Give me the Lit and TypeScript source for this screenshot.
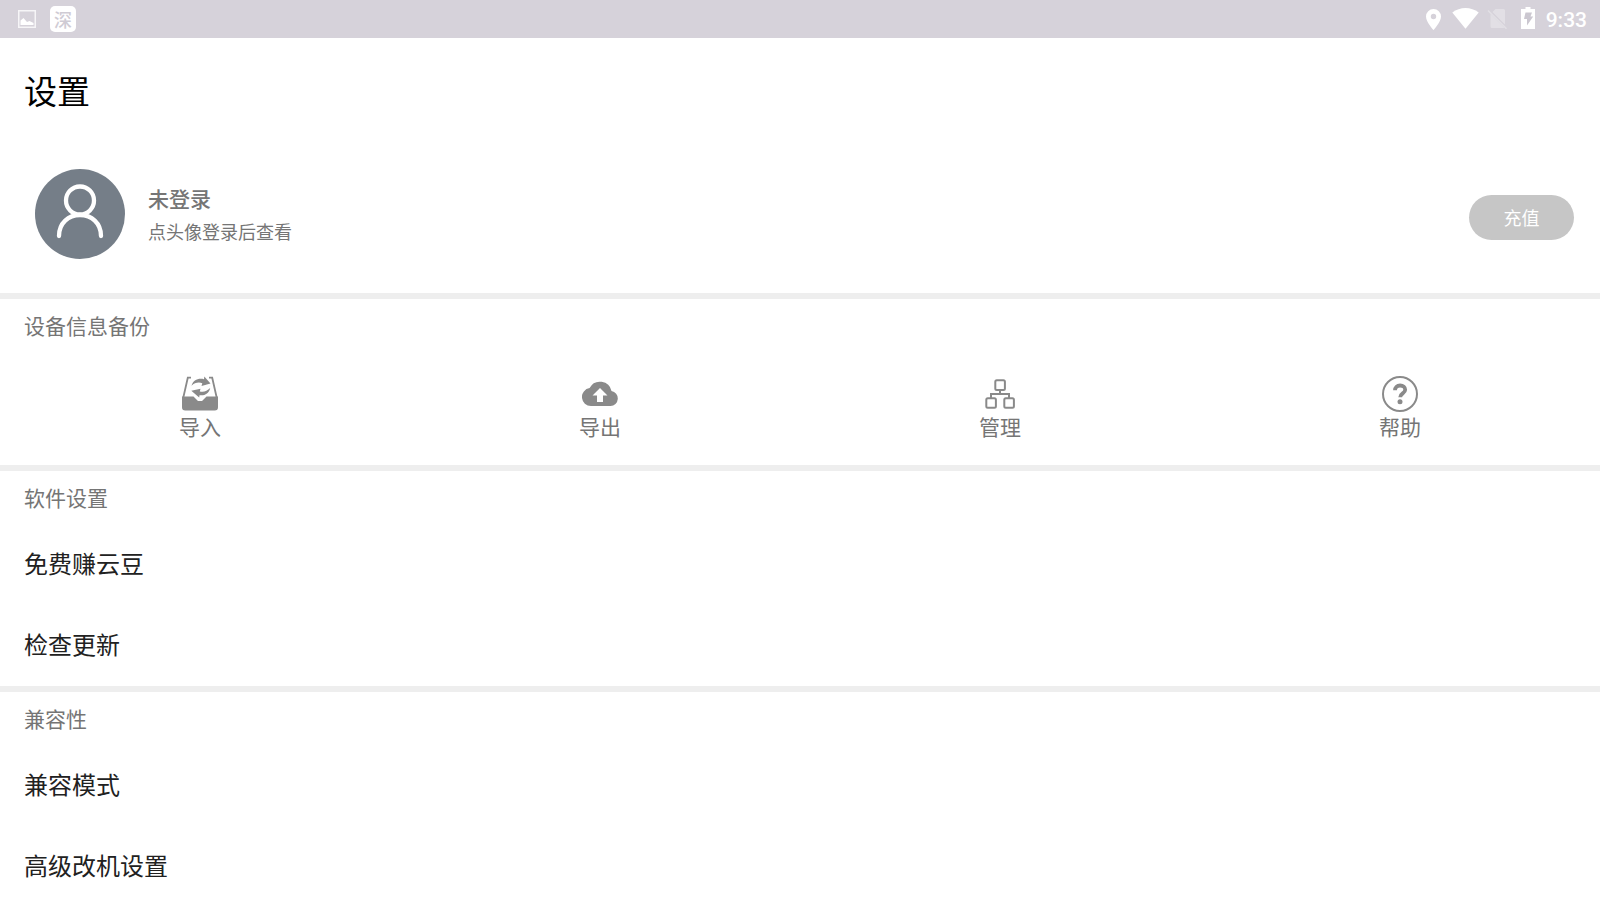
import { LitElement, html, css, svg, TemplateResult } from "lit";
import { customElement } from "lit/decorators.js";

interface Action {
  label: string;
  icon: TemplateResult;
}

interface Section {
  title: string;
  items: string[];
}

const importIcon = svg`
  <path d="M9 1.700H5.800L1.200 22M27 1.700h3.200L34.800 22" fill="none" stroke="currentColor" stroke-width="1.800"/>
  <path d="M0 20.500h11.500l4.500 4.500h4l4.500-4.500H36v10.700a3.300 3.300 0 0 1-3.300 3.300H3.300A3.300 3.300 0 0 1 0 31.200z"/>
  <path d="M9.500 9.800C11 4.500 16 1.800 22 3.200L22.300.6 28.500 7.500 19.500 10 20.300 7.200C16.500 5.800 12.500 6.800 9.500 9.800z"/>
  <path d="M28.200 12C27 17.500 22.500 20 17.500 19.200L17.200 21.500 9.300 14.800 18.500 12.800 17.800 15.400C21.500 16.500 25 15.200 28.200 12z"/>`;

const exportIcon = svg`
  <path d="M29.500 15.100A11.700 11.700 0 0 0 7.600 12.100 9 9 0 0 0 9 30h19.500a7.500 7.500 0 0 0 1-14.900zM21 19.500V26h-6v-6.500h-4.500L18 12l7.500 7.500z"/>`;

const manageIcon = svg`
  <g fill="none" stroke="currentColor" stroke-width="2">
    <rect x="13.300" y="4.300" width="9.600" height="9.600" rx="1.500"/>
    <rect x="4.300" y="22.200" width="9.600" height="9.600" rx="1.500"/>
    <rect x="22.300" y="22.200" width="9.600" height="9.600" rx="1.500"/>
    <path d="M18 14v4M9 22v-4h18v4"/>
  </g>`;

const helpIcon = svg`
  <circle cx="18" cy="18" r="17" fill="none" stroke="currentColor" stroke-width="2"/>
  <path d="M13 14.300c0-3 2-4.800 5.100-4.800s5.100 1.700 5.100 4.300c0 3.700-5 3.500-5 7.400" fill="none" stroke="currentColor" stroke-width="3.800"/>
  <circle cx="18" cy="25.800" r="2.500"/>`;

const actions: Action[] = [
  { label: "导入", icon: importIcon },
  { label: "导出", icon: exportIcon },
  { label: "管理", icon: manageIcon },
  { label: "帮助", icon: helpIcon },
];

const sections: Section[] = [
  { title: "软件设置", items: ["免费赚云豆", "检查更新"] },
  { title: "兼容性", items: ["兼容模式", "高级改机设置"] },
];

@customElement("status-bar")
export class StatusBar extends LitElement {
  static styles = css`
    :host {
      display: flex;
      flex: none;
      align-items: center;
      height: 38px;
      padding: 0 13px 0 18px;
      background: #d6d2da;
      color: #fff;
    }
    .picture {
      width: 18px;
      height: 18px;
    }
    .app {
      display: grid;
      place-items: center;
      width: 26px;
      height: 26px;
      margin-left: 14px;
      border-radius: 5px;
      background: #fff;
      color: #cfcbd4;
      font: 500 18px/26px "Noto Sans CJK SC", sans-serif;
    }
    .system {
      display: flex;
      margin-left: auto;
    }
    .glyph {
      width: 32px;
      height: 38px;
      fill: #fff;
    }
    .clock {
      font: 500 21px/40px Roboto, sans-serif;
      height: 38px;
    }
  `;

  render() {
    return html`
      <svg class="picture" viewBox="0 0 18 18" aria-hidden="true">
        <rect x=".75" y=".75" width="16.500" height="16.500" fill="none" stroke="#f6f5f7" stroke-width="1.500"/>
        <path d="M2.500 15v-4.500l3-2.500 3.500 4 2.500-1 4 2V15z" fill="#fff"/>
      </svg>
      <span class="app">深</span>
      <div class="system">
        <svg class="glyph" viewBox="0 0 32 38" aria-hidden="true">
          <path fill-rule="evenodd" d="M15.500 9A7.500 7.500 0 0 0 8 16.500C8 22 15.500 30 15.500 30S23 22 23 16.500A7.500 7.500 0 0 0 15.500 9zm0 4.800a2.700 2.700 0 1 1 0 5.400 2.700 2.700 0 0 1 0-5.400z"/>
        </svg>
        <svg class="glyph" viewBox="0 0 32 38" aria-hidden="true">
          <path d="M15.500 28.700 2.300 12.500C10 6.500 21 6.500 28.700 12.500z"/>
        </svg>
        <svg class="glyph" viewBox="0 0 32 38" aria-hidden="true">
          <g opacity=".3">
            <path d="M13.500 9H21.500Q23 9 23 10.500V24.500L10.500 12zM8.500 14 22.500 28H10Q8.500 28 8.500 26.500z"/>
            <path d="M6 10.500 24.500 28.800" stroke="#fff" stroke-width="1.600"/>
          </g>
        </svg>
        <svg class="glyph" viewBox="0 0 32 38" aria-hidden="true">
          <path d="M11.500 7h5v2H21v20H7V9h4.500z"/>
          <path d="M11.500 12.500H18l-1.500 4h2.700L13 25.500v-6.500h-3z" fill="#cbc7d0"/>
        </svg>
        <time class="clock">9:33</time>
      </div>
    `;
  }
}

@customElement("app-root")
export class AppRoot extends LitElement {
  static styles = css`
    :host {
      display: flex;
      flex-direction: column;
      height: 100vh;
      background: #fff;
      color: #757575;
      font-family: "Noto Sans CJK SC", sans-serif;
    }
    button {
      border: 0;
      padding: 0;
      background: none;
      color: inherit;
      font-family: inherit;
      cursor: pointer;
    }
    .content {
      flex: 1;
      min-height: 0;
      overflow-y: auto;
      scrollbar-width: none;
    }
    .page-title {
      margin: 0;
      padding: 28px 24px 30px;
      color: #000;
      font-size: 33px;
      font-weight: 400;
      line-height: 48px;
    }
    .profile {
      display: flex;
      align-items: center;
      padding: 25px 26px 34px 35px;
    }
    .avatar {
      width: 90px;
      height: 90px;
      border-radius: 50%;
      background: #757e88;
    }
    .avatar-art {
      display: block;
      width: 90px;
      height: 90px;
    }
    .who {
      flex: 1;
      margin: 2px 23px 0;
    }
    .name {
      margin: 0;
      font-size: 21px;
      font-weight: 500;
      line-height: 33px;
    }
    .hint {
      margin: 0;
      font-size: 18px;
      line-height: 33px;
    }
    .recharge {
      width: 105px;
      height: 45px;
      margin-top: 7px;
      padding-bottom: 2px;
      border-radius: 24px;
      background: #c6c6c6;
      color: #fff;
      font-size: 18px;
    }
    .section {
      border-top: 6px solid #eee;
    }
    .section-title {
      margin: 0;
      padding: 0 24px;
      font-size: 21px;
      font-weight: 400;
      line-height: 53px;
    }
    .actions {
      display: grid;
      grid-template-columns: repeat(4, 1fr);
    }
    .action {
      display: flex;
      flex-direction: column;
      align-items: center;
      padding: 24px 0;
      font-size: 21px;
      line-height: 29px;
    }
    .action-icon {
      width: 36px;
      height: 36px;
      color: #8a8a8a;
      fill: currentColor;
    }
    .item {
      display: block;
      width: 100%;
      padding: 0 24px 3px;
      color: #212121;
      font-size: 24px;
      line-height: 78px;
      text-align: left;
    }
  `;

  render() {
    return html`
      <status-bar></status-bar>
      <main class="content">
        <h1 class="page-title">设置</h1>
        <div class="profile">
          <button class="avatar" aria-label="登录">
            <svg class="avatar-art" viewBox="0 0 90 90" fill="none" stroke="#fff" stroke-width="4.300" stroke-linecap="round">
              <circle cx="45" cy="31.500" r="14"/>
              <path d="M24 67C24 54 33.500 46 45 46S66 54 66 67"/>
            </svg>
          </button>
          <div class="who">
            <h2 class="name">未登录</h2>
            <p class="hint">点头像登录后查看</p>
          </div>
          <button class="recharge">充值</button>
        </div>
        <section class="section">
          <h2 class="section-title">设备信息备份</h2>
          <div class="actions">
            ${actions.map(
              (a) => html`<button class="action">
                <svg class="action-icon" viewBox="0 0 36 36" aria-hidden="true">${a.icon}</svg>
                <span>${a.label}</span>
              </button>`
            )}
          </div>
        </section>
        ${sections.map(
          (s) => html`<section class="section">
            <h2 class="section-title">${s.title}</h2>
            ${s.items.map((item) => html`<button class="item">${item}</button>`)}
          </section>`
        )}
      </main>
    `;
  }
}
